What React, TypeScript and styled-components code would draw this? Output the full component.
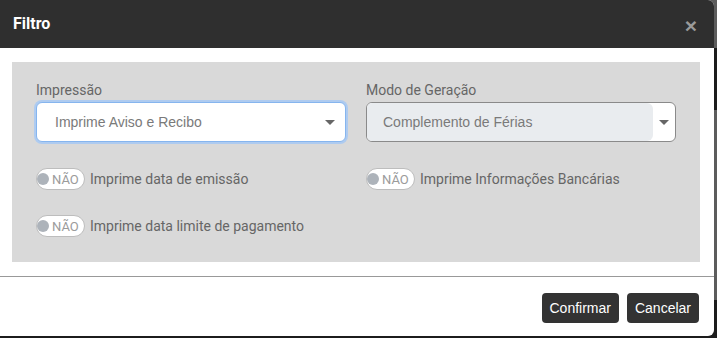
import React from 'react';
import styled, { createGlobalStyle } from 'styled-components';

const GlobalStyle = createGlobalStyle`
  html, body {
    margin: 0;
    padding: 0;
  }
  body {
    width: 717px;
    height: 338px;
    overflow: hidden;
    background: linear-gradient(
      to bottom,
      #5c5c5c 0px,
      #5c5c5c 48px,
      #1c1c1c 48px,
      #1c1c1c 110px,
      #5c5c5c 110px,
      #5c5c5c 300px,
      #1c1c1c 300px
    );
    font-family: Roboto, 'Liberation Sans', Arial, sans-serif;
  }
`;

const Modal = styled.div`
  width: 714px;
  height: 336px;
  background: #fff;
  border-radius: 0 6px 6px 0;
  overflow: hidden;
  display: flex;
  flex-direction: column;
`;

const Header = styled.div`
  height: 48px;
  background: #2f2f2f;
  display: flex;
  align-items: center;
  justify-content: space-between;
  padding: 0 17px 0 13px;
  box-sizing: border-box;
`;

const Title = styled.div`
  color: #fff;
  font-family: Roboto, sans-serif;
  font-weight: 700;
  font-size: 16px;
  margin-top: -2px;
`;

const Close = styled.button`
  border: 0;
  background: none;
  padding: 0;
  color: #9a9a9a;
  font-family: 'Liberation Sans', Arial, sans-serif;
  font-weight: 700;
  font-size: 21px;
  line-height: 1;
  margin-top: 2px;
  cursor: pointer;
`;

const Body = styled.div`
  padding: 14px 14px 14px 12px;
  border-bottom: 1px solid #999;
`;

const Panel = styled.div`
  background: #d9d9d9;
  padding: 20px 26px 25px 24px;
  display: grid;
  grid-template-columns: 310px 310px;
  column-gap: 20px;
  row-gap: 25px;
`;

const Field = styled.div`
  display: flex;
  flex-direction: column;
  margin-bottom: 1px;
`;

const Label = styled.label`
  font-family: Roboto, sans-serif;
  font-size: 14px;
  line-height: 17px;
  color: #666;
  margin-bottom: 3px;
`;

const Caret = styled.span`
  width: 0;
  height: 0;
  border-left: 5px solid transparent;
  border-right: 5px solid transparent;
  border-top: 5px solid #666;
`;

const SelectBox = styled.div<{ $focused?: boolean }>`
  height: 40px;
  box-sizing: border-box;
  border-radius: 6px;
  display: flex;
  align-items: center;
  overflow: hidden;
  background: #fff;
  border: 1px solid ${(p) => (p.$focused ? '#86b5ee' : '#8a8a8a')};
  box-shadow: ${(p) => (p.$focused ? '0 0 0 2px #aecbf0' : 'none')};
`;

const SelectValue = styled.div<{ $disabled?: boolean }>`
  flex: 1;
  align-self: stretch;
  display: flex;
  align-items: center;
  padding-left: ${(p) => (p.$disabled ? '16px' : '18px')};
  font-family: 'Liberation Sans', Arial, sans-serif;
  font-size: 14px;
  color: #7a7a7a;
  background: ${(p) => (p.$disabled ? '#e9ecef' : 'transparent')};
  border-radius: ${(p) => (p.$disabled ? '0 6px 6px 0' : '0')};
`;

const CaretSlot = styled.div<{ $wide?: boolean }>`
  width: ${(p) => (p.$wide ? '22px' : '18px')};
  display: flex;
  justify-content: center;
  padding-right: ${(p) => (p.$wide ? '0' : '6px')};
`;

const ToggleRow = styled.div`
  display: flex;
  align-items: center;
  gap: 5px;
`;

const Pill = styled.span`
  width: 49px;
  height: 22px;
  box-sizing: border-box;
  border: 1px solid #bdbdbd;
  border-radius: 11px;
  background: #fff;
  display: flex;
  align-items: center;
  padding: 0 4px 0 0;
`;

const Knob = styled.span`
  width: 12px;
  height: 12px;
  border-radius: 50%;
  background: #adb3ba;
  margin-right: 3px;
`;

const PillText = styled.span`
  font-family: Roboto, sans-serif;
  font-size: 13px;
  color: #9b9b9b;
`;

const ToggleLabel = styled.span`
  font-family: Roboto, sans-serif;
  font-size: 14px;
  color: #666;
`;

const Footer = styled.div`
  flex: 1;
  display: flex;
  justify-content: flex-end;
  align-items: flex-start;
  gap: 8px;
  padding: 16px 15px 0 0;
`;

const Button = styled.button`
  height: 30px;
  padding: 0 8px;
  border: 0;
  border-radius: 4px;
  background: #333;
  color: #fff;
  font-family: 'Liberation Sans', Arial, sans-serif;
  font-size: 14px;
  cursor: pointer;
`;

const Toggle = ({ label }: { label: string }) => (
  <ToggleRow>
    <Pill>
      <Knob />
      <PillText>NÃO</PillText>
    </Pill>
    <ToggleLabel>{label}</ToggleLabel>
  </ToggleRow>
);

const App = () => {
  return (
    <>
      <GlobalStyle />
      <Modal>
        <Header>
          <Title>Filtro</Title>
          <Close>×</Close>
        </Header>
        <Body>
          <Panel>
            <Field>
              <Label>Impressão</Label>
              <SelectBox $focused>
                <SelectValue>Imprime Aviso e Recibo</SelectValue>
                <CaretSlot>
                  <Caret />
                </CaretSlot>
              </SelectBox>
            </Field>
            <Field>
              <Label>Modo de Geração</Label>
              <SelectBox>
                <SelectValue $disabled>Complemento de Férias</SelectValue>
                <CaretSlot $wide>
                  <Caret />
                </CaretSlot>
              </SelectBox>
            </Field>
            <Toggle label="Imprime data de emissão" />
            <Toggle label="Imprime Informações Bancárias" />
            <Toggle label="Imprime data limite de pagamento" />
          </Panel>
        </Body>
        <Footer>
          <Button>Confirmar</Button>
          <Button>Cancelar</Button>
        </Footer>
      </Modal>
    </>
  );
};

export default App;
